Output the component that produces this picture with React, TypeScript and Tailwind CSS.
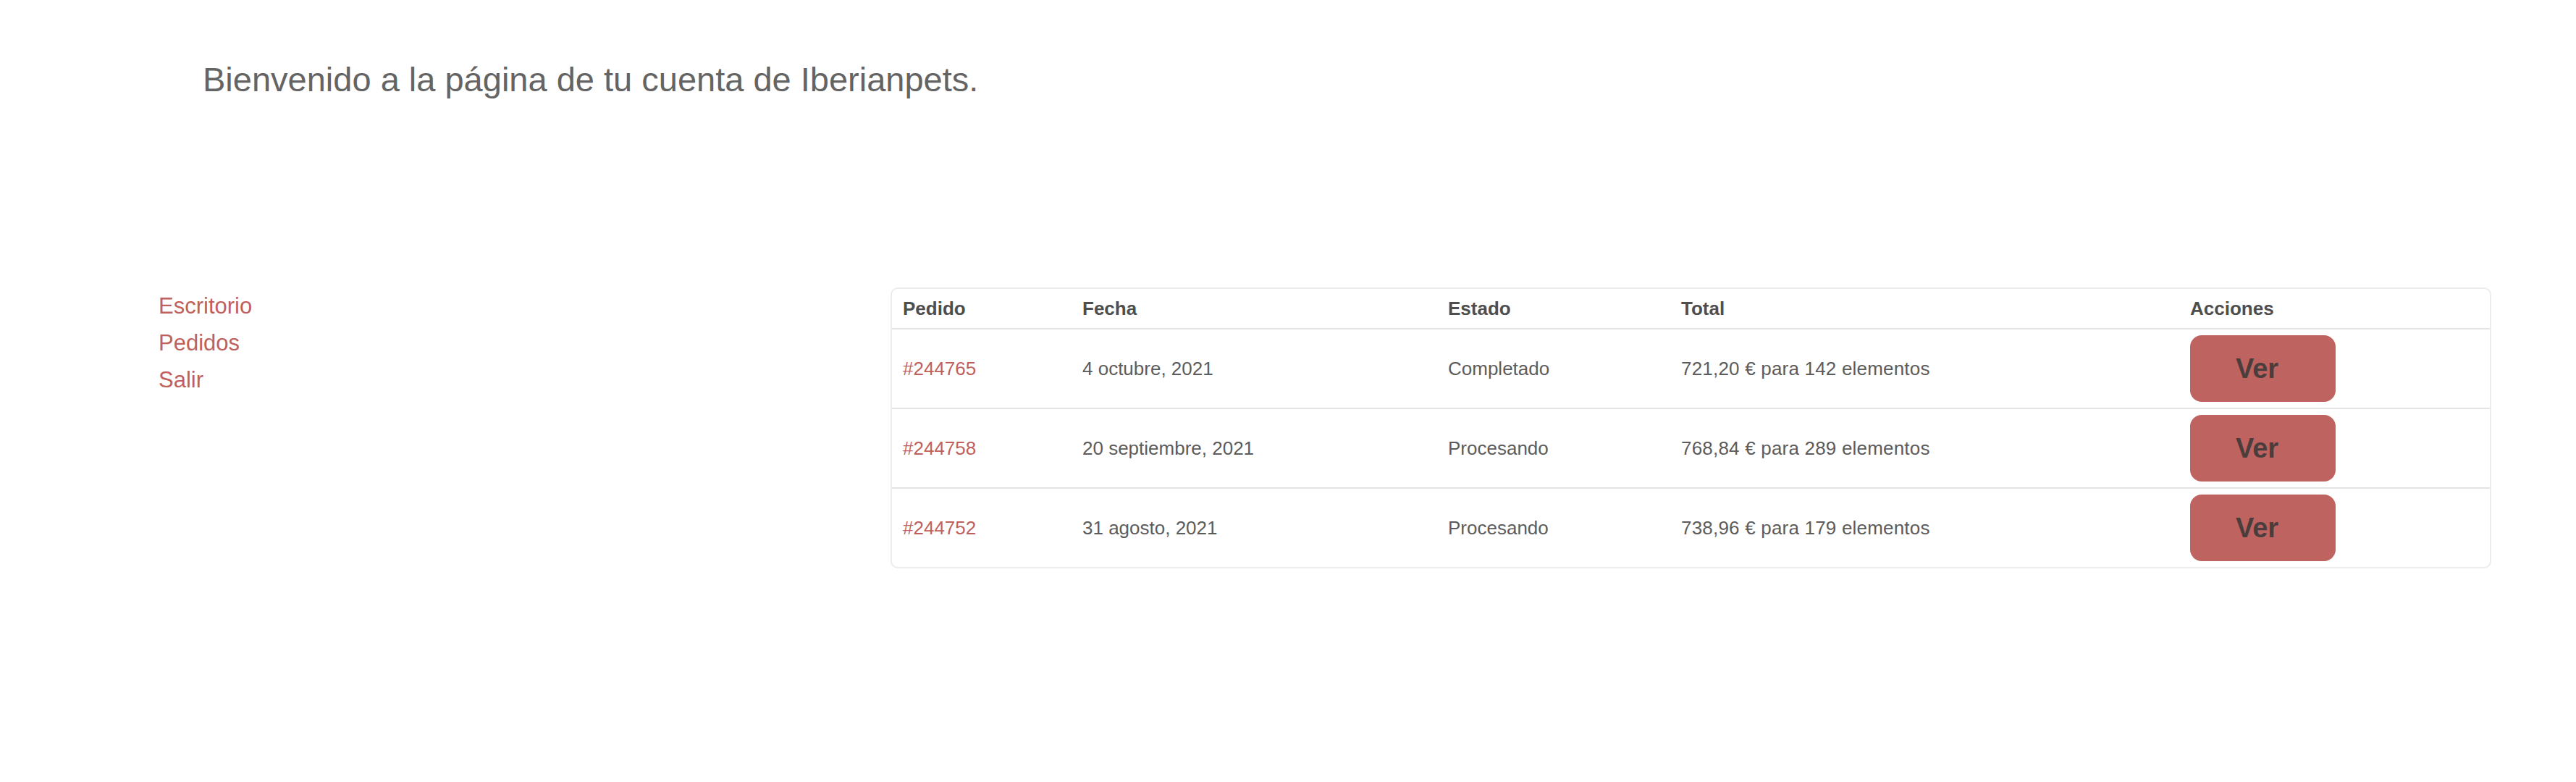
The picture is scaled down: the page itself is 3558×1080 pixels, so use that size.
import React from "react";

interface Order {
    id: string;
    date: string;
    status: string;
    total: string;
}

const orders: Order[] = [
    { id: "#244765", date: "4 octubre, 2021", status: "Completado", total: "721,20 € para 142 elementos" },
    { id: "#244758", date: "20 septiembre, 2021", status: "Procesando", total: "768,84 € para 289 elementos" },
    { id: "#244752", date: "31 agosto, 2021", status: "Procesando", total: "738,96 € para 179 elementos" },
];

const cols = "grid grid-cols-[248px_505px_322px_703px_1fr]";

export default function App() {
    return (
        <div
            className="min-h-screen bg-white text-[#5c5c5c]"
            style={{ fontFamily: '"Liberation Sans", Arial, Helvetica, sans-serif' }}
        >
            <div className="pl-[280px] pt-[86px]">
                <h1 className="text-[47px] leading-[47px] font-normal text-[#646464]">
                    Bienvenido a la página de tu cuenta de Iberianpets.
                </h1>
            </div>

            <div className="flex items-start pl-[219px] mt-[264px]">
                {/* menu lateral */}
                <nav className="w-[1011px] flex flex-col">
                    {["Escritorio", "Pedidos", "Salir"].map((item) => (
                        <a key={item} href="#" className="text-[31px] leading-[51px] text-[#c0605c]">
                            {item}
                        </a>
                    ))}
                </nav>

                <div className="w-[2211px] border-2 border-[#ececec] rounded-[10px] overflow-hidden">
                    <div className={`${cols} h-[56px] items-center border-b-2 border-[#e3e3e3] text-[26px] font-bold text-[#4e4e4e]`}>
                        <div className="pl-[15px]">Pedido</div>
                        <div className="pl-[15px]">Fecha</div>
                        <div className="pl-[15px]">Estado</div>
                        <div className="pl-[15px]">Total</div>
                        <div className="pl-[15px]">Acciones</div>
                    </div>

                    {orders.map((o, idx) => (
                        <div
                            key={o.id}
                            className={`${cols} items-center py-[8px] text-[26px] ${idx < orders.length - 1 ? "border-b-2 border-[#e3e3e3]" : ""}`}
                        >
                            <div className="pl-[15px]">
                                <a href="#" className="text-[#c0605c]">{o.id}</a>
                            </div>
                            <div className="pl-[15px]">{o.date}</div>
                            <div className="pl-[15px]">{o.status}</div>
                            <div className="pl-[15px] tracking-[0.2px]">{o.total}</div>
                            <div className="pl-[15px]">
                                <button className="w-[201px] h-[92px] rounded-[16px] bg-[#bf6360] pr-[16px] text-[38px] font-bold text-[#4b3d3c] flex items-center justify-center">
                                    Ver
                                </button>
                            </div>
                        </div>
                    ))}
                </div>
            </div>
        </div>
    );
}
